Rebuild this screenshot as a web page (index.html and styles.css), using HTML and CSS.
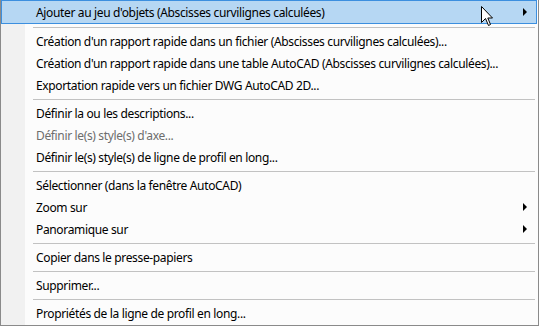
FILE: index.html
```html
<!DOCTYPE html>
<html lang="fr">
<head>
<meta charset="utf-8">
<link rel="stylesheet" href="styles.css">
</head>
<body>
<div class="menu">
  <div class="item active"><span class="label">Ajouter au jeu d'objets (Abscisses curvilignes calculées)</span><span class="arrow"></span></div>
  <div class="sep"></div>
  <div class="item"><span class="label">Création d'un rapport rapide dans un fichier (Abscisses curvilignes calculées)...</span></div>
  <div class="item"><span class="label">Création d'un rapport rapide dans une table AutoCAD (Abscisses curvilignes calculées)...</span></div>
  <div class="item"><span class="label">Exportation rapide vers un fichier DWG AutoCAD 2D...</span></div>
  <div class="sep"></div>
  <div class="item"><span class="label">Définir la ou les descriptions...</span></div>
  <div class="item disabled"><span class="label">Définir le(s) style(s) d'axe...</span></div>
  <div class="item"><span class="label">Définir le(s) style(s) de ligne de profil en long...</span></div>
  <div class="sep"></div>
  <div class="item"><span class="label">Sélectionner (dans la fenêtre AutoCAD)</span></div>
  <div class="item"><span class="label">Zoom sur</span><span class="arrow"></span></div>
  <div class="item"><span class="label">Panoramique sur</span><span class="arrow"></span></div>
  <div class="sep"></div>
  <div class="item"><span class="label">Copier dans le presse-papiers</span></div>
  <div class="sep"></div>
  <div class="item"><span class="label">Supprimer...</span></div>
  <div class="sep"></div>
  <div class="item"><span class="label">Propriétés de la ligne de profil en long...</span></div>
  <svg class="cursor" width="13" height="21" viewBox="0 0 13 21">
    <path d="M0.5 0.5 L0.5 16.5 L4.5 12.5 L7.5 19.5 L9.5 18.5 L6.8 12 L11.5 12 Z" fill="#fff" stroke="#000" stroke-width="1" stroke-linejoin="miter"/>
  </svg>
</div>
</body>
</html>
```

FILE: styles.css
```css
html, body {
  margin: 0;
  padding: 0;
  background: #fcfcfc;
}

.menu {
  position: relative;
  width: 539px;
  height: 326px;
  box-sizing: border-box;
  border: 1px solid #8a8a8a;
  border-top: none;
  padding-bottom: 1px;
  background: linear-gradient(to right, #f1f1f1 0, #f1f1f1 24px, #fcfcfc 24px);
  font-family: "Noto Sans", "Open Sans", sans-serif;
  font-size: 12px;
  letter-spacing: -0.35px;
  color: #000;
  overflow: hidden;
}

.item {
  display: flex;
  align-items: center;
  height: 22px;
  padding-left: 35px;
  margin-right: 1px;
  box-sizing: border-box;
  white-space: nowrap;
}

.item .label {
  flex: 1;
}

.item.active {
  height: 24px;
  padding-left: 34px;
  background: #b6d7f3;
  border: 1px solid #3c8fdf;
}

.item.disabled {
  color: #6d6d6d;
}

.arrow {
  width: 0;
  height: 0;
  border-left: 4px solid #000;
  border-top: 4px solid transparent;
  border-bottom: 4px solid transparent;
  margin-right: 10px;
}

.item.active .arrow {
  margin-right: 9px;
}

.sep {
  height: 1px;
  margin: 3px 3px 2px 32px;
  background: #c2c2c2;
}

.cursor {
  position: absolute;
  left: 480px;
  top: 6px;
}
```
